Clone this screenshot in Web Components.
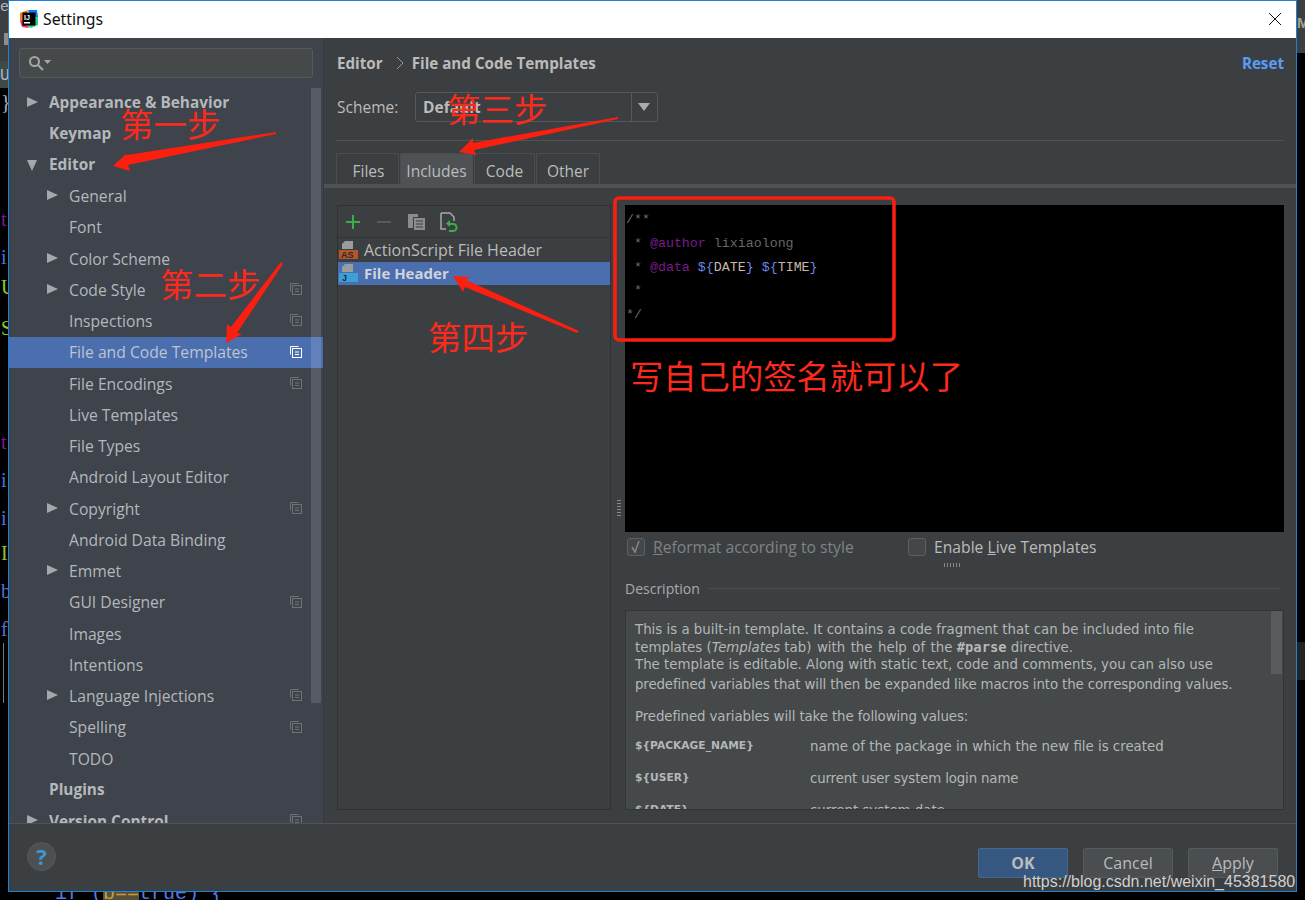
<!DOCTYPE html>
<html lang="en">
<head>
<meta charset="utf-8">
<title>Settings</title>
<style>
  html, body { margin: 0; height: 100%; background: #000; overflow: hidden; }
  body { font-family: "Open Sans", "Noto Sans CJK SC", sans-serif; }
</style>
</head>
<body>
<ide-backdrop></ide-backdrop>
<settings-window>
  <settings-sidebar slot="side"></settings-sidebar>
  <template-panel slot="main"></template-panel>
</settings-window>
<step-notes></step-notes>

<script>
  const SANS = `"Open Sans", "Noto Sans CJK SC", sans-serif`;

  // what is visible of the IDE behind the dialog
  class IdeBackdrop extends HTMLElement {
    constructor() {
      super();
      this.attachShadow({ mode: "open" });
      const glyphs = [
        ["}", 90, "#a9b7c6"], ["t", 207, "#7a1a8c"], ["i", 245, "#4f6fe0"], ["U", 275, "#8fc82c"],
        ["S", 316, "#8fc82c"], ["t", 430, "#7a1a8c"], ["i", 468, "#4f6fe0"], ["i", 506, "#4f6fe0"],
        ["I", 541, "#8fc82c"], ["b", 579, "#5a6fd0"], ["f", 617, "#5a6fd0"]
      ].map(([c, y, col]) => `<span style="top:${y}px;color:${col}">${c}</span>`).join("");
      this.shadowRoot.innerHTML = `
      <style>
        :host { position: absolute; inset: 0; display: block; background: #000; overflow: hidden; }
        .top { position: absolute; left: 0; right: 0; top: 0; height: 53px; background: #3c3f41; }
        .strip { position: absolute; left: 0; top: 0; width: 8px; height: 61px; background: #3c3f41; color: #a9b7c6; overflow: hidden;
                 font: 15px/15px "Liberation Mono", monospace; }
        .block { position: absolute; left: 4px; top: 33px; width: 4px; height: 12px; background: #8b8e90; }
        .tab { position: absolute; left: 0; top: 61px; width: 8px; height: 27px; background: #3f4a44; color: #a9b7c6; overflow: hidden;
               font: 16px/30px "Liberation Mono", monospace; }
        span { position: absolute; left: 1px; font: 20px/24px "Liberation Serif", serif; }
        .gutter { position: absolute; left: 3px; top: 643px; width: 1px; height: 60px; background: #777; }
        .shade { position: absolute; right: 0; top: 642px; width: 9px; height: 38px; background: #222; }
        .peek { position: absolute; left: 1297px; top: 14px; width: 8px; height: 18px; overflow: hidden; color: #a9a08c;
                font: bold 15px/18px "Liberation Sans", sans-serif; }
        .code { position: absolute; left: 55px; top: 882px; font: 20px/24px "Liberation Mono", monospace; color: #5a78e0; white-space: pre; }
        .code b { font-weight: normal; background: #52503a; color: #c89a3c; }
      </style>
      <div class="top"></div>
      <div class="strip">e<div class="block"></div></div>
      <div class="tab">Us</div>
      ${glyphs}
      <div class="gutter"></div><div class="shade"></div><div class="peek">M</div>
      <div class="code">if (<b>b==</b>true) {</div>`;
    }
  }

  class SettingsWindow extends HTMLElement {
    constructor() {
      super();
      this.attachShadow({ mode: "open" });
      this.shadowRoot.innerHTML = `
      <style>
        :host { position: absolute; left: 8px; top: 0; width: 1289px; height: 892px; box-sizing: border-box;
                border: 1px solid #1883d7; display: flex; flex-direction: column; background: #3c3f41; color: #bbb; }
        .title { height: 37px; flex: none; background: #fff; display: flex; align-items: center; color: #111;
                 font: 15.800px "Noto Sans", sans-serif; padding: 0 14px 2px 10px; gap: 4px; box-sizing: border-box; }
        .title span { flex: 1; }
        .body { flex: 1; display: flex; min-height: 0; }
        .foot { height: 68px; flex: none; border-top: 1px solid #505254; display: flex; align-items: center;
                padding: 0 18px 0 18px; box-sizing: border-box; padding-bottom: 2px; }
        .help { width: 29px; height: 29px; border-radius: 50%; background: #4c5052; border: 1px solid #55595b; box-sizing: border-box;
                color: #3f96d2; font: bold 22px/27px "Open Sans", sans-serif; text-align: center; margin-right: auto; }
        dlg-button { margin-top: 12px; }
        dlg-button + dlg-button { margin-left: 15px; }
      </style>
      <div class="title">
        <svg width="20" height="20" viewBox="0 0 20 20">
          <path d="M1 4 9 1 6 10 1 12Z" fill="#f97a12"/><path d="M1 12 6 10 10 19 3 18Z" fill="#fe2857"/>
          <path d="M9 1 18 1 19 8 12 10Z" fill="#087cfa"/><path d="M4 15 12 19 19 16 19 8Z" fill="#21d789"/>
          <rect x="3.500" y="3.500" width="13" height="13" fill="#000"/>
          <rect x="5" y="13" width="6" height="1.500" fill="#fff"/>
          <text x="5" y="11" font-family="Liberation Sans" font-weight="bold" font-size="7" fill="#fff">IJ</text>
        </svg>
        <span>Settings</span>
        <svg width="14" height="14" viewBox="0 0 14 14"><path d="M1 1 13 13M13 1 1 13" stroke="#111" stroke-width="1"/></svg>
      </div>
      <div class="body"><slot name="side"></slot><slot name="main"></slot></div>
      <div class="foot">
        <div class="help">?</div>
        <dlg-button primary>OK</dlg-button>
        <dlg-button>Cancel</dlg-button>
        <dlg-button><u>A</u>pply</dlg-button>
      </div>`;
    }
  }

  class DlgButton extends HTMLElement {
    constructor() {
      super();
      this.attachShadow({ mode: "open" });
      this.shadowRoot.innerHTML = `
      <style>
        :host { display: block; width: 90px; height: 30px; box-sizing: border-box; border: 1px solid #555a5c; border-radius: 2px;
                background: #4a4e50; color: #bbb; font: 16px/28px ${SANS}; text-align: center; }
        :host([primary]) { background: #365880; border-color: #43688c; font-weight: bold; }
      </style><slot></slot>`;
    }
  }

  // one line of the settings tree
  class TreeRow extends HTMLElement {
    constructor() {
      super();
      this.attachShadow({ mode: "open" });
      this.shadowRoot.innerHTML = `
      <style>
        :host { display: flex; align-items: center; height: 31.260px; flex: none; color: #b4b8bb; font: 15.700px ${SANS};
                position: relative; white-space: nowrap; }
        :host([bold]) { font-weight: bold; font-size: 15.400px; }
        :host([selected]) { background: #4b6eaf; color: #bdc4d0; }
        .arrow { width: 0; height: 0; position: absolute; top: 10px; }
        .right { border-left: 11px solid #a5a8ab; border-top: 5.500px solid transparent; border-bottom: 5.500px solid transparent; }
        .down { border-top: 11px solid #a5a8ab; border-left: 5.500px solid transparent; border-right: 5.500px solid transparent; top: 11px; }
        .label { position: absolute; }
        svg { position: absolute; left: 281px; top: 9px; }
      </style>`;
    }
    connectedCallback() {
      const lvl = +this.getAttribute("level") || 0;
      const x = lvl ? 60 : 40;
      let html = "";
      if (this.hasAttribute("arrow")) {
        const down = this.getAttribute("arrow") === "down";
        html += `<div class="arrow ${down ? "down" : "right"}" style="left:${x - 22}px"></div>`;
      }
      html += `<span class="label" style="left:${x}px"><slot></slot></span>`;
      if (this.hasAttribute("copy")) {
        const c = this.hasAttribute("selected") ? "#fff" : "#6e7275";
        html += `<svg width="12" height="12" viewBox="0 0 12 12" fill="none" stroke="${c}">
          <path d="M.5 8.500V.5H8.500"/><rect x="2.500" y="2.500" width="9" height="9"/><path d="M5 6H9M5 8.500H9"/></svg>`;
      }
      if (!this.rendered) {
        this.shadowRoot.innerHTML += html;
        this.rendered = true;
      }
    }
  }

  class SettingsSidebar extends HTMLElement {
    constructor() {
      super();
      this.attachShadow({ mode: "open" });
      // label, level, arrow, bold, copy
      const rows = [
        ["Appearance &amp; Behavior", 0, "right", 1], ["Keymap", 0, "", 1], ["Editor", 0, "down", 1],
        ["General", 1, "right"], ["Font", 1], ["Color Scheme", 1, "right"], ["Code Style", 1, "right", 0, 1],
        ["Inspections", 1, "", 0, 1], ["File and Code Templates", 1, "", 0, 1, 1], ["File Encodings", 1, "", 0, 1],
        ["Live Templates", 1], ["File Types", 1], ["Android Layout Editor", 1], ["Copyright", 1, "right", 0, 1],
        ["Android Data Binding", 1], ["Emmet", 1, "right"], ["GUI Designer", 1, "", 0, 1], ["Images", 1],
        ["Intentions", 1], ["Language Injections", 1, "right", 0, 1], ["Spelling", 1, "", 0, 1], ["TODO", 1],
        ["Plugins", 0, "", 1], ["Version Control", 0, "right", 1, 1]
      ];
      const list = rows.map(([t, l, a, b, c, s]) =>
        `<tree-row level="${l}" ${a ? `arrow="${a}"` : ""} ${b ? "bold" : ""} ${c ? "copy" : ""} ${s ? "selected" : ""}>${t}</tree-row>`
      ).join("");
      this.shadowRoot.innerHTML = `
      <style>
        :host { display: flex; flex-direction: column; width: 315px; flex: none; background: #3e434c; box-sizing: border-box;
                padding-top: 10px; position: relative; overflow: hidden; border-right: 1px solid #363a3f; }
        .search { height: 30px; margin: 0 10px; flex: none; background: #45494a; border: 1px solid #565a5c; border-radius: 3px;
                  box-sizing: border-box; display: flex; align-items: center; padding-left: 8px; }
        .tree { margin-top: 8.700px; display: flex; flex-direction: column; }
        .bar { position: absolute; left: 302px; width: 10px; top: 50px; height: 615px; background: rgba(255, 255, 255, .13); }
      </style>
      <div class="search">
        <svg width="24" height="16" viewBox="0 0 24 16" fill="none" stroke="#a5a8ab" stroke-width="2">
          <circle cx="6.500" cy="6.500" r="4.500"/><path d="M10 10 15 15"/>
          <path d="M16 5H23L19.500 9Z" fill="#a5a8ab" stroke="none"/></svg>
      </div>
      <div class="tree">${list}</div>
      <div class="bar"></div>`;
    }
  }

  class TemplatePanel extends HTMLElement {
    constructor() {
      super();
      this.attachShadow({ mode: "open" });
      this.shadowRoot.innerHTML = `
      <style>
        :host { flex: 1; min-width: 0; display: flex; flex-direction: column; background: #3c3f41; font: 15.500px ${SANS}; color: #bbb; }
        .crumb { height: 50px; flex: none; display: flex; align-items: center; padding: 0 12px 0 13px; font-weight: bold; font-size: 15.200px; box-sizing: border-box; }
        .crumb svg { margin: 0 8px 0 13px; }
        .crumb .reset { margin-left: auto; color: #589df6; }
        .scheme { display: flex; align-items: center; padding-left: 13px; gap: 16px; height: 30px; margin-top: 4px; flex: none; }
        .scheme > span { width: 62px; }
        .combo { width: 243px; height: 30px; box-sizing: border-box; border: 1px solid #55595b; border-radius: 3px; display: flex; background: #3c3f41; }
        .combo b { flex: 1; padding-left: 7px; line-height: 28px; border-right: 1px solid #55595b; }
        .combo i { width: 25px; position: relative; }
        .combo i::after { content: ""; position: absolute; left: 6px; top: 10px; border-top: 8px solid #aaa; border-left: 6px solid transparent; border-right: 6px solid transparent; }
        .rule { height: 1px; background: #505254; margin: 18px 12px 0 12px; flex: none; }
        .tabs { display: flex; padding-left: 12px; margin-top: 12px; height: 31px; flex: none; gap: 1px; }
        .tabs div { box-sizing: border-box; border: 1px solid #4a4d4f; border-bottom: 0; line-height: 32px; text-align: center; padding-top: 1px; }
        .tabs .on { background: #4e5254; }
        .band { height: 4px; background: #4e5254; flex: none; }
        .work { flex: 1; display: flex; min-height: 0; padding: 17px 12px 13px 13px; gap: 14px; }
        .list { width: 274px; flex: none; box-sizing: border-box; border: 1px solid #2f3133; }
        .tools { height: 31px; border-bottom: 1px solid #333; display: flex; align-items: center; padding-left: 7px; gap: 15px; }
        .entry { height: 23.500px; display: flex; align-items: center; gap: 5px; padding-left: 1px; white-space: nowrap; font-size: 16px; }
        .entry.on { background: #4b6eaf; font-weight: bold; font-size: 15px; color: #d0d4da; }
        .right { flex: 1; min-width: 0; display: flex; flex-direction: column; position: relative; }
        .editor { height: 327px; flex: none; background: #000; box-sizing: border-box; padding: 3px 1px; font: 13.300px/23.800px "Liberation Mono", "Liberation Serif", monospace; color: #6c6c6c; white-space: pre; }
        .editor .tag { color: #7a1a8c; }
        .editor .txt { color: #666; }
        .editor .var { color: #6a86e8; }
        .editor .name { color: #c9b8a8; }
        .checks { display: flex; height: 30px; align-items: center; padding-left: 2px; flex: none; font-size: 15.700px; }
        .box { width: 18px; height: 18px; box-sizing: border-box; border: 1px solid #5e6163; border-radius: 3px; background: #43474a; margin-right: 8px; display: flex; }
        .dim { color: #7f8386; width: 255px; }
        .legend { display: flex; align-items: center; gap: 9px; margin-top: 18px; height: 16px; flex: none; font-size: 14px; color: #a8abad; margin-bottom: 14px; margin-right: 3px; }
        .legend::after { content: ""; flex: 1; height: 1px; background: #4f4f4f; }
        .desc { flex: 1; min-height: 0; position: relative; overflow: hidden; background: #45494a; box-sizing: border-box; border: 1px solid #323436;
                padding: 10px 9px; font: 13.350px/17.500px "DejaVu Sans", sans-serif; color: #b4b7b9; }
        .desc p { margin: 0; }
        .desc code { font: bold 13.800px/17px "DejaVu Sans Mono", monospace; }
        .desc .wide { word-spacing: 1.200px; }
        .desc .far { display: block; margin-top: 2.500px; letter-spacing: -.12px; }
        .desc .v { display: grid; grid-template-columns: 175px 1fr; height: 32px; }
        .desc .v b { font-size: 10.700px; line-height: 15px; }
        .desc .bar { position: absolute; right: 1px; top: 0; width: 11px; height: 63px; background: #595b5d; }
        .grip { position: absolute; left: -8px; top: 295px; width: 4px; height: 16px; background: repeating-linear-gradient(#888 0 1px, transparent 1px 3px); }
        .grip2 { position: absolute; left: 319px; top: 358px; width: 18px; height: 4px; background: repeating-linear-gradient(90deg, #888 0 1px, transparent 1px 3px); }
      </style>
      <div class="crumb"><span>Editor</span>
        <svg width="8" height="14" viewBox="0 0 8 14" fill="none" stroke="#999"><path d="M1 1 7 7 1 13"/></svg>
        <span>File and Code Templates</span><span class="reset">Reset</span></div>
      <div class="scheme"><span>Scheme:</span><div class="combo"><b>Default</b><i></i></div></div>
      <div class="rule"></div>
      <div class="tabs">
        <div style="width:63px;padding-left:2px">Files</div><div class="on" style="width:73px">Includes</div>
        <div style="width:61px">Code</div><div style="width:64px">Other</div>
      </div>
      <div class="band"></div>
      <div class="work">
        <div class="list">
          <div class="tools">
            <svg width="16" height="16" viewBox="0 0 16 16"><path d="M8 1V15M1 8H15" stroke="#3fae4a" stroke-width="2"/></svg>
            <svg width="16" height="16" viewBox="0 0 16 16"><path d="M1 8H15" stroke="#585b5d" stroke-width="2"/></svg>
            <svg width="20" height="18" viewBox="0 0 20 18"><path d="M1 1H11V4H6V15H1Z" fill="#8a8d90"/><path d="M7 5H18V17H7Z" fill="#8a8d90"/><path d="M9 8H16M9 11H16M9 14H16" stroke="#3c3f41"/></svg>
            <svg style="margin-left:-3px" width="20" height="20" viewBox="0 0 20 20" fill="none"><path d="M2 1H11L15 5V9M2 1V17H7" stroke="#a5a8ab" stroke-width="1.500"/>
              <path d="M9 12H14A3.500 3.500 0 1 1 14 19H10" stroke="#3fae4a" stroke-width="2"/><path d="M11 8V15L7 11.500Z" fill="#3fae4a"/></svg>
          </div>
          <div class="entry">
            <svg width="20" height="20" viewBox="0 0 20 20"><path d="M6 1H14V9H3V4Z" fill="#9a9da0"/><rect x="0" y="10" width="19" height="9" fill="#b5562a"/>
              <text x="2" y="18" font-family="Liberation Sans" font-weight="bold" font-size="9" fill="#2b2b2b">AS</text></svg>
            <span>ActionScript File Header</span></div>
          <div class="entry on">
            <svg width="20" height="20" viewBox="0 0 20 20"><path d="M6 1H14V9H3V4Z" fill="#9a9da0"/><rect x="0" y="10" width="19" height="9" fill="#3d9fd8"/>
              <text x="3" y="18" font-family="Liberation Sans" font-weight="bold" font-size="9" fill="#1d2b3a">J</text></svg>
            <span>File Header</span></div>
        </div>
        <div class="right">
          <div class="grip"></div>
          <div class="editor">/**
 * <span class="tag">@author</span> <span class="txt">lixiaolong</span>
 * <span class="tag">@data</span> <span class="var">\${</span><span class="name">DATE</span><span class="var">}</span> <span class="var">\${</span><span class="name">TIME</span><span class="var">}</span>
 *
*/</div>
          <div class="checks">
            <span class="box"><svg width="16" height="16" viewBox="0 0 16 16" fill="none"><path d="M4 8 7 13 11 2" stroke="#85888b" stroke-width="1.500"/></svg></span>
            <span class="dim"><u>R</u>eformat according to style</span>
            <span class="box"></span><span>Enable <u>L</u>ive Templates</span>
          </div>
          <div class="grip2"></div>
          <div class="legend">Description</div>
          <div class="desc">
            <p>This is a built-in template. It contains a code fragment that can be included into file<br>
            templates (<i>Templates</i> <span class="wide">tab) with the help of the</span> <code>#parse</code> directive.<br>
            The template is editable. Along with static text, code and comments, you can also use
            <span class="far">predefined variables that will then be expanded like macros into the corresponding values.</span></p>
            <p style="margin:14px 0 13px;letter-spacing:-.1px">Predefined variables will take the following values:</p>
            <div class="v"><b>\${PACKAGE_NAME}</b><span>name of the package in which the new file is created</span></div>
            <div class="v"><b>\${USER}</b><span style="letter-spacing:-.15px">current user system login name</span></div>
            <div class="v"><b>\${DATE}</b><span>current system date</span></div>
            <div class="bar"></div>
          </div>
        </div>
      </div>`;
    }
  }

  // red hand-drawn notes and the watermark that lie over the screenshot
  class StepNotes extends HTMLElement {
    constructor() {
      super();
      this.attachShadow({ mode: "open" });
      const notes = [
        ["第一步", 120, 103, 33.500], ["第二步", 160, 263, 33.500], ["第三步", 447, 88, 33.500],
        ["第四步", 428, 316, 33.500], ["写自己的签名就可以了", 630, 355, 33.300]
      ].map(([t, x, y, s]) => `<div class="note" style="left:${x}px;top:${y}px;font-size:${s}px">${t}</div>`).join("");
      this.shadowRoot.innerHTML = `
      <style>
        :host { position: absolute; inset: 0; display: block; pointer-events: none; }
        svg { position: absolute; left: 0; top: 0; }
        .note { position: absolute; color: #fb2a1c; font-family: "Noto Sans CJK SC", sans-serif; font-weight: 400; line-height: 1.2; white-space: nowrap; }
        .mark { position: absolute; left: 1023px; top: 872px; font: 16px/20px "Liberation Sans", sans-serif; color: #d0d0d0; white-space: nowrap; }
      </style>
      <svg width="1305" height="900" viewBox="0 0 1305 900">
        <g fill="#fb1f10">
          <path d="M276 132 276 134 128 165 130 171 113 166 126 154 127 155Z"/>
          <path d="M281 262 283 264 237 333 242 334 226 343 227 324 231 327Z"/>
          <path d="M618 117 618 119 474 150 476 155 459 152 473 138 473 143Z"/>
          <path d="M579 331 577 333 465 287 463 292 453 276 470 277 466 280Z"/>
        </g>
        <rect x="615" y="198" width="279" height="142" rx="4" fill="none" stroke="#fb1f10" stroke-width="3.500"/>
      </svg>
      ${notes}
      <div class="mark">https://blog.csdn.net/weixin_45381580</div>`;
    }
  }

  customElements.define("ide-backdrop", IdeBackdrop);
  customElements.define("dlg-button", DlgButton);
  customElements.define("tree-row", TreeRow);
  customElements.define("settings-sidebar", SettingsSidebar);
  customElements.define("template-panel", TemplatePanel);
  customElements.define("settings-window", SettingsWindow);
  customElements.define("step-notes", StepNotes);
</script>
</body>
</html>
